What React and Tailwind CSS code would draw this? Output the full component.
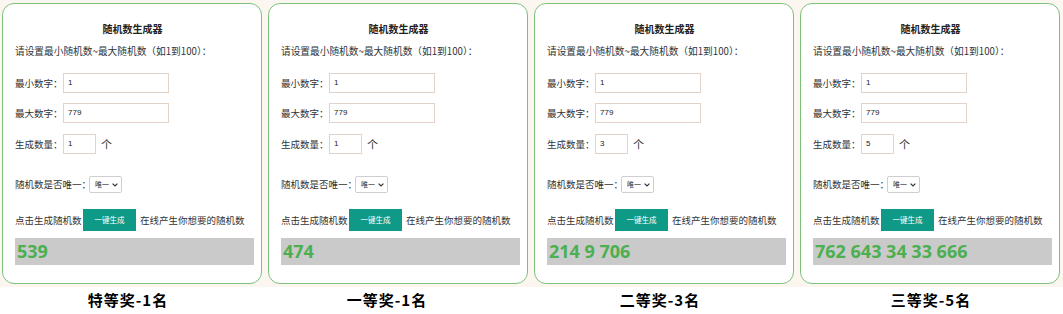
import React from 'react';

const cards = [
  { count: '1', result: '539', caption: '特等奖-1名' },
  { count: '1', result: '474', caption: '一等奖-1名' },
  { count: '3', result: '214 9 706', caption: '二等奖-3名' },
  { count: '5', result: '762 643 34 33 666', caption: '三等奖-5名' },
];

const cjk = "font-['Microsoft_YaHei','Noto_Sans_CJK_SC',sans-serif]";

function Field({ label, value, narrow, suffix }) {
  return (
    <div className="flex items-center h-[20px] whitespace-nowrap">
      <span className="w-[48px] shrink-0 text-[9.5px] text-[#333]">{label}</span>
      <div
        className={`${narrow ? 'w-[33px]' : 'w-[106px]'} shrink-0 h-[20px] border border-[#e2d2c8] bg-white flex items-center pl-[4px] text-[8px] text-[#222] font-['Liberation_Sans',sans-serif]`}
      >
        {value}
      </div>
      {suffix && <span className="ml-[5px] text-[11px] text-[#333]">{suffix}</span>}
    </div>
  );
}

function Card({ count, result }) {
  return (
    <div className={`w-[260px] h-[281px] shrink-0 border border-[#7cc27a] rounded-[12px] bg-white pl-[12px] pr-[7px] pt-[18px] whitespace-nowrap ${cjk}`}>
      <div className="h-[14px] leading-[14px] text-center text-[10px] font-bold text-[#222] pr-[4px]">随机数生成器</div>
      <div className="mt-[8px] h-[14px] leading-[14px] text-[9.7px] text-[#333]">请设置最小随机数~最大随机数（如1到100）：</div>

      <div className="mt-[15px]">
        <Field label="最小数字：" value="1" />
      </div>
      <div className="mt-[10px]">
        <Field label="最大数字：" value="779" />
      </div>
      <div className="mt-[11px]">
        <Field label="生成数量：" value={count} narrow suffix="个" />
      </div>

      <div className="mt-[22px] flex items-center h-[17px]">
        <span className="text-[9.5px] text-[#333] w-[74px] shrink-0">随机数是否唯一：</span>
        <div className="h-[17px] w-[33px] shrink-0 border border-[#cfcfcf] rounded-[2px] flex items-center pl-[5px] gap-[3px] text-[7px] text-[#222]">
          <span>唯一</span>
          <svg width="6" height="4" viewBox="0 0 6 4" fill="none" stroke="#333" strokeWidth="1.2">
            <path d="M0.6 0.6 L3 3 L5.4 0.6" />
          </svg>
        </div>
      </div>

      <div className="mt-[16px] flex items-center h-[22px]">
        <span className="text-[9.5px] text-[#333] w-[68px] shrink-0">点击生成随机数</span>
        <button className="w-[53px] h-[22px] shrink-0 bg-[#0f9a88] text-white text-[7.5px]">一键生成</button>
        <span className="ml-[4px] text-[9.5px] text-[#333]">在线产生你想要的随机数</span>
      </div>

      <div className="mt-[7px] h-[27px] bg-[#cacaca] flex items-center pl-[2px]">
        <span className="text-[18px] font-bold text-[#4caf50] font-['Open_Sans',sans-serif]">{result}</span>
      </div>
    </div>
  );
}

export default function App() {
  return (
    <div className="w-[1063px] h-[314px] bg-white overflow-hidden">
      <div className="h-[287px] bg-[#fbf6ef] flex gap-[6px] pl-[2px] pt-[3px]">
        {cards.map((c, i) => (
          <Card key={i} {...c} />
        ))}
      </div>
      <div className="flex gap-[6px] pl-[2px]">
        {cards.map((c, i) => (
          <div
            key={i}
            className={`w-[260px] h-[27px] flex items-center justify-center text-[15px] tracking-[1px] font-bold text-black ${cjk} ${i === 1 ? 'pr-[22px]' : i === 3 ? 'pl-[2px]' : 'pr-[8px]'}`}
          >
            {c.caption}
          </div>
        ))}
      </div>
    </div>
  );
}
